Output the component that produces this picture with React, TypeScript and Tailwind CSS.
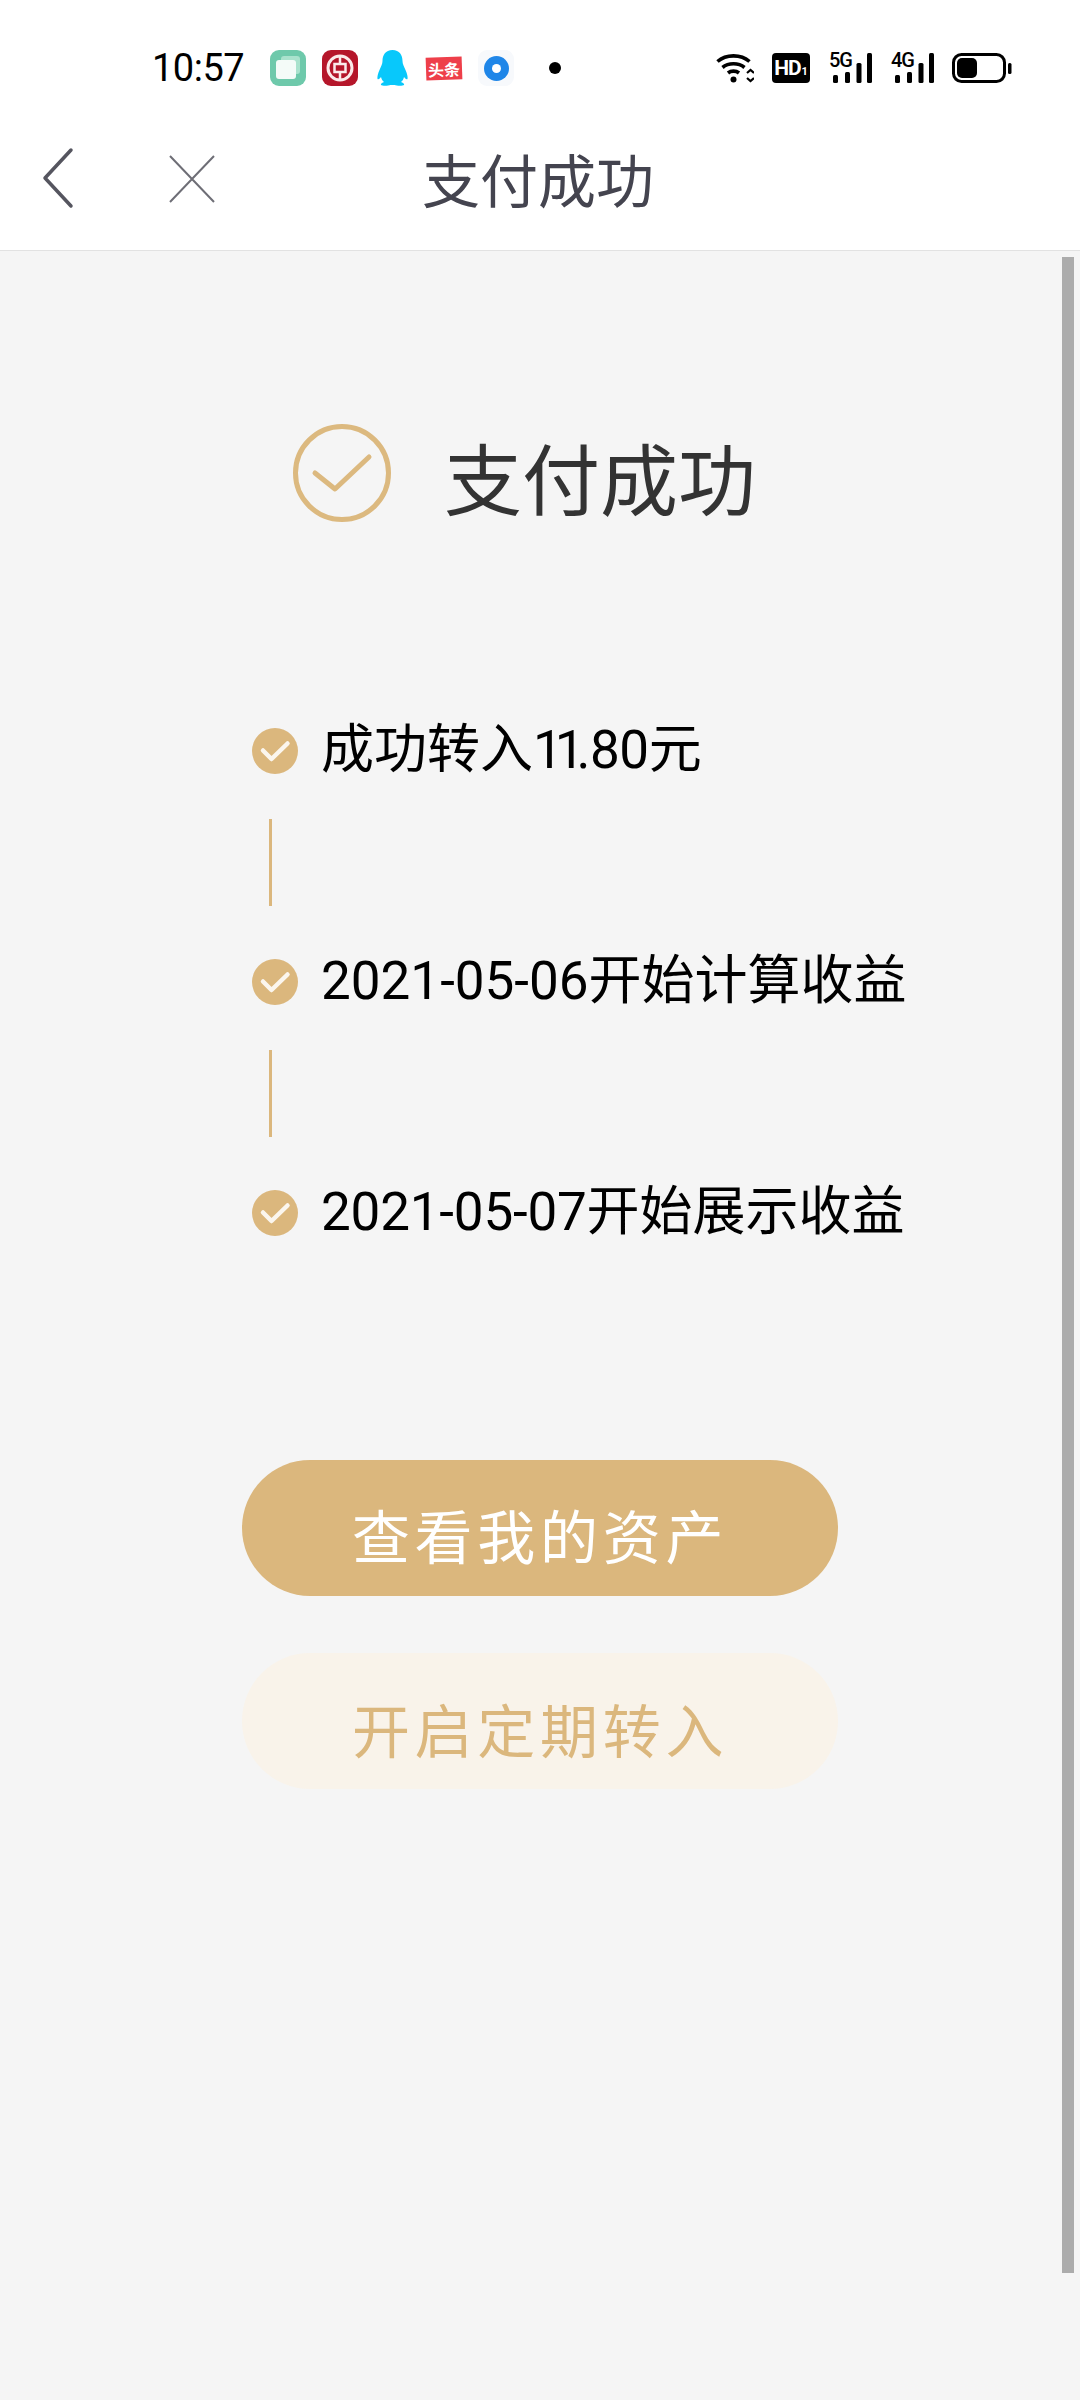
import type { ReactNode } from "react";

const cjk = "font-['Noto_Sans_CJK_SC','Noto_Sans',sans-serif]";
const digits = "font-['Roboto',sans-serif] font-normal";

function Signal({ label }: { label: string }) {
  return (
    <div className="relative w-[46px] h-[30px]">
      <span className="absolute left-[1px] top-[-3px] text-[20px] leading-[20px] font-medium text-black font-['Roboto',sans-serif] tracking-[-1.2px]">{label}</span>
      <svg className="absolute left-0 top-0" width="46" height="30" viewBox="0 0 46 30" fill="#000">
        <rect x="5" y="22" width="5" height="8" rx="1.5" />
        <rect x="17" y="19" width="5" height="11" rx="1.5" />
        <rect x="28.500" y="10" width="5" height="20" rx="1.5" />
        <rect x="39" y="0" width="5" height="30" rx="1.5" />
      </svg>
    </div>
  );
}

function SmallCheck() {
  return (
    <svg width="46" height="46" viewBox="0 0 46 46" className="shrink-0">
      <circle cx="23" cy="23" r="23" fill="#dbb77d" />
      <path d="M11 22.500 L19.500 31 L35.500 15.500" fill="none" stroke="#fbf6ee" strokeWidth="4.500" strokeLinecap="round" strokeLinejoin="round" />
    </svg>
  );
}

function Connector() {
  return <div className="ml-[17px] w-[3px] h-[87px] bg-[#dbb77d] mt-[45px] mb-[53px]" />;
}

function Step({ children }: { children: ReactNode }) {
  return (
    <div className="flex items-center h-[46px] gap-[23px]">
      <SmallCheck />
      <span className="text-[53px] leading-[46px] text-black whitespace-nowrap mb-[8px]">{children}</span>
    </div>
  );
}

export default function App() {
  return (
    <div className={`relative w-[1080px] h-[2400px] bg-[#f5f5f5] overflow-hidden flex flex-col ${cjk}`}>
      <div className="bg-white border-b border-[#e2e2e2] h-[251px] shrink-0">
        <div className="h-[136px] flex items-center pl-[152px] relative">
          <span className="w-[118px] text-[38px] leading-none tracking-[-0.5px] text-black font-['Roboto',sans-serif] font-normal">10:57</span>
          <div className="flex items-center">
            <svg width="36" height="36" viewBox="0 0 36 36" className="mr-[16px]">
              <rect width="36" height="36" rx="9" fill="#6ec9ab" />
              <rect x="11" y="6" width="19" height="18" rx="3" fill="#a9e2cd" />
              <rect x="6" y="10" width="20" height="19" rx="3" fill="#f4fbf8" />
            </svg>
            <svg width="36" height="36" viewBox="0 0 36 36" className="mr-[19px]">
              <rect width="36" height="36" rx="9" fill="#b5162a" />
              <circle cx="18" cy="18" r="12" fill="none" stroke="#fbeaea" strokeWidth="3" />
              <rect x="12.500" y="14" width="11" height="8" fill="none" stroke="#fbeaea" strokeWidth="2.500" />
              <path d="M18 6v8M18 22v8" stroke="#fbeaea" strokeWidth="2.500" />
            </svg>
            <svg width="31" height="36" viewBox="0 0 31 36" className="mr-[18px]">
              <path d="M15.500 0C8.500 0 5.500 5 5.500 11C5.500 14 4 16.500 2.500 20C1 23.500 0 27 .5 29C1.500 30 3 28.500 4 27C4.500 29 5.500 31 7 32C4.500 33 3.500 34 4 35C5 36 11 36 13.500 35H17.500C20 36 26 36 27 35C27.500 34 26.500 33 24 32C25.500 31 26.500 29 27 27C28 28.500 29.500 30 30.500 29C31 27 30 23.500 28.500 20C27 16.500 25.500 14 25.500 11C25.500 5 22.500 0 15.500 0Z" fill="#08c8fb" />
            </svg>
            <div className="w-[36px] h-[23px] bg-[#ee3f4a] -rotate-2 mr-[16px] flex items-center justify-center text-white text-[16px] leading-none font-bold whitespace-nowrap">头条</div>
            <div className="w-[36px] h-[36px] rounded-[9px] bg-[#f7f9fc] flex items-center justify-center mr-[35px]">
              <div className="w-[25px] h-[25px] rounded-full bg-[#1f86e8] flex items-center justify-center">
                <div className="w-[9px] h-[9px] rounded-full bg-white" />
              </div>
            </div>
            <div className="w-[12px] h-[12px] rounded-full bg-black" />
          </div>
          <div className="ml-auto mr-[68px] flex items-center h-[30px]">
            <svg width="38" height="30" viewBox="0 0 38 30" fill="none" stroke="#000" strokeWidth="3.600" className="mr-[18px]">
              <path d="M1.500 8.500C10 1 25 1 33.500 8.500" />
              <path d="M6.500 14.500C12.500 9.500 22.500 9.500 28.500 14.500" />
              <path d="M12 20C15 17.500 20 17.500 23 20" />
              <circle cx="17.500" cy="26.500" r="3" fill="#000" stroke="none" />
              <path d="M31 20l3.500-3 3.500 3M31 25l3.500 3 3.500-3" strokeWidth="2.200" />
            </svg>
            <div className="w-[38px] h-[30px] rounded-[4px] bg-black flex items-center justify-center mr-[18px] text-white font-['Roboto',sans-serif] font-bold leading-none">
              <span className="text-[21px] tracking-[-1.2px]">HD</span>
              <span className="text-[11px] mt-[6px] ml-[1px]">1</span>
            </div>
            <div className="mr-[16px]"><Signal label="5G" /></div>
            <div className="mr-[16px]"><Signal label="4G" /></div>
            <svg width="60" height="30" viewBox="0 0 60 30">
              <rect x="1.500" y="1.500" width="51" height="27" rx="8" fill="none" stroke="#000" strokeWidth="3" />
              <rect x="5" y="5" width="20" height="20" rx="5" fill="#000" />
              <rect x="56" y="10" width="3.500" height="11" rx="1.500" fill="#000" />
            </svg>
          </div>
        </div>
        <div className="h-[114px] relative flex items-center justify-center">
          <svg width="34" height="62" viewBox="0 0 34 62" fill="none" stroke="#55555f" strokeWidth="3.500" className="absolute left-[40px] top-[11px]" strokeLinecap="round" strokeLinejoin="round">
            <path d="M31 3 L5 31 L31 59" />
          </svg>
          <svg width="48" height="50" viewBox="0 0 48 50" fill="none" stroke="#6e6e76" strokeWidth="2" className="absolute left-[168px] top-[18px]">
            <path d="M2 2 L46 48 M46 2 L2 48" />
          </svg>
          <span className="text-[58px] leading-none text-[#44444f] -mt-[31px] ml-[-4px]">支付成功</span>
        </div>
      </div>

      <div className="flex-1 relative">
        <div className="flex items-center pl-[293px] pt-[173px] gap-[53px]">
          <svg width="98" height="98" viewBox="0 0 98 98" fill="none" stroke="#dcb97f" strokeWidth="5" strokeLinecap="round" strokeLinejoin="round">
            <circle cx="49" cy="49" r="46.500" />
            <path d="M22 49 L42 65 L76 33" />
          </svg>
          <span className="text-[78px] leading-none text-[#333333] whitespace-nowrap mt-[6px]">支付成功</span>
        </div>

        <div className="flex flex-col pl-[252px] mt-[206px]">
          <Step>成功转入<span className={digits}><span className="tracking-[-8px]">11</span><span className="ml-[0px] tracking-[-0.5px]">.80</span></span>元</Step>
          <Connector />
          <Step><span className={digits}>2021-05-06</span>开始计算收益</Step>
          <Connector />
          <Step><span className={`${digits} tracking-[-0.2px]`}>2021-05-07</span>开始展示收益</Step>
        </div>

        <div className="flex flex-col pl-[242px] mt-[224px] gap-[57px]">
          <div className="w-[596px] h-[136px] rounded-[68px] bg-[#dbb77d] flex items-center justify-center text-white text-[58px] tracking-[4.700px] leading-none pt-[11px]">查看我的资产</div>
          <div className="w-[596px] h-[136px] rounded-[68px] bg-[#f9f3ea] flex items-center justify-center text-[#dbb77d] text-[58px] tracking-[4.700px] leading-none pt-[13px]">开启定期转入</div>
        </div>

        <div className="absolute right-[6px] top-[6px] w-[12px] h-[2016px] bg-[#acacac]" />
      </div>
    </div>
  );
}
